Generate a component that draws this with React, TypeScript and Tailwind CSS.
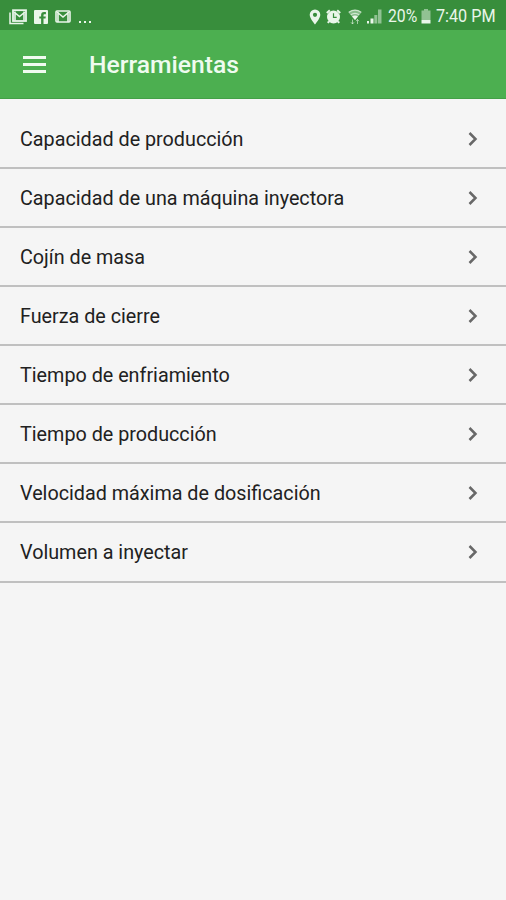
import React from "react";

const tools = [
	"Capacidad de producción",
	"Capacidad de una máquina inyectora",
	"Cojín de masa",
	"Fuerza de cierre",
	"Tiempo de enfriamiento",
	"Tiempo de producción",
	"Velocidad máxima de dosificación",
	"Volumen a inyectar",
];

const StatusBar: React.FC = () => (
	<div className="flex h-[30px] items-center justify-between bg-[#388e3c] pt-[3px] pr-[10px] pl-[9px] text-[#eaf6ea]">
		<div className="flex items-center">
			{/* stacked mail */}
			<svg width="18" height="16" viewBox="0 0 18 16" fill="none" stroke="currentColor">
				<path d="M1 3.5v11h13.5" strokeWidth="1.5" />
				<rect x="4" y="1.2" width="13" height="10.8" strokeWidth="1.8" />
				<path d="M5 3l5.5 4.5L16 3M6 2.5v9M15 2.5v9" strokeWidth="1.6" />
			</svg>
			<svg className="ml-[7px]" width="14" height="14" viewBox="0 0 14 14" fill="currentColor">
				<path d="M1 0h12a1 1 0 0 1 1 1v12a1 1 0 0 1-1 1H9.500V8.600h2l.3-2.200H9.500V5.200c0-.7.3-1 1-1h1.400V2.100H10C8 2.100 7.100 3.200 7.100 4.900v1.500H5.300v2.200h1.800V14H1a1 1 0 0 1-1-1V1a1 1 0 0 1 1-1z" />
			</svg>
			<svg className="ml-[7px]" width="16" height="13" viewBox="0 0 16 13" fill="none" stroke="currentColor">
				<rect x="1" y="1" width="14" height="11" rx="1" strokeWidth="1.6" />
				<path d="M2 2l6 5 6-5M3 2v10M13 2v10" strokeWidth="1.600" />
			</svg>
			<div className="ml-[8px] mt-[10px] flex gap-[3px]">
				<i className="size-[2px] bg-current" />
				<i className="size-[2px] bg-current" />
				<i className="size-[2px] bg-current" />
			</div>
		</div>
		<div className="flex items-center">
			<svg width="12" height="16" viewBox="0 0 12 16" fill="currentColor">
				<path
					fillRule="evenodd"
					d="M6 .5A5.300 5.300 0 0 0 .7 5.800C.7 9.500 6 15.500 6 15.500s5.300-6 5.300-9.700A5.300 5.300 0 0 0 6 .5zM6 3.700a2.100 2.100 0 1 1 0 4.200 2.100 2.100 0 0 1 0-4.200z"
				/>
			</svg>
			<svg className="ml-[5px]" width="15" height="15" viewBox="0 0 15 15" fill="currentColor">
				<circle cx="7.500" cy="8" r="6.500" />
				<path d="M.8 4L3.800 1.200M14.200 4L11.200 1.200M3 12.500l-1.200 1.400M12 12.500l1.200 1.400" stroke="currentColor" strokeWidth="2" />
				<path d="M7.500 4.300v4h3.200" fill="none" stroke="#388e3c" strokeWidth="1.200" />
			</svg>
			<svg className="ml-[7px]" width="14" height="16" viewBox="0 0 14 16" fill="none" stroke="currentColor">
				<path d="M.3 3.200Q7-1.800 13.700 3.200L7 11z" fill="currentColor" stroke="none" opacity=".45" />
				<path d="M.8 3.200Q7-.8 13.200 3.200M2.800 5.800Q7 3 11.200 5.800" strokeWidth="1.300" opacity=".75" />
				<path d="M4 7.500Q7 5.500 10 7.500L7 11z" fill="currentColor" stroke="none" />
				<path d="M4.500 10.500v4.500M9.500 15v-4.500M3 13.300l1.500 1.700L6 13.300M8 12.200l1.500-1.700 1.500 1.700" strokeWidth="1" opacity=".6" />
			</svg>
			<svg className="ml-[5px]" width="15" height="15" viewBox="0 0 15 15" fill="currentColor">
				<path d="M0 12h2v2.500H0zM3.500 9.500h3v5h-3z" />
				<path d="M7.300 6h3v8.500h-3zM11 .500h3.500v14H11z" opacity=".5" />
			</svg>
			<span className="ml-[6px] w-[31px] text-[17.500px] leading-none whitespace-nowrap">
				<span className="inline-block origin-left scale-x-[0.9]">20%</span>
			</span>
			<svg className="ml-[2px]" width="10" height="15" viewBox="0 0 10 15" fill="currentColor">
				<path d="M3 0h4v1.500h2.500V11H.5V1.500H3z" opacity=".5" />
				<path d="M.5 11h9v3.500h-9z" />
			</svg>
			<span className="ml-[5px] w-[60px] text-[17.500px] leading-none whitespace-nowrap">
				<span className="inline-block origin-left scale-x-[0.925]">7:40 PM</span>
			</span>
		</div>
	</div>
);

const App: React.FC = () => {
	return (
		<div className="h-[900px] w-[506px] overflow-hidden bg-[#f5f5f5] font-[Roboto,sans-serif]">
			<StatusBar />
			<header className="flex h-[69px] items-center border-b border-[#43a047] bg-[#4caf50] pl-[23px] text-[#effbef]">
				<button type="button" aria-label="Menú" className="flex w-[23px] flex-col gap-1">
					<span className="h-[3px] w-full bg-current" />
					<span className="h-[3px] w-full bg-current" />
					<span className="h-[3px] w-full bg-current" />
				</button>
				<h1 className="mt-0.5 ml-[43px] text-[24.700px] leading-none font-medium">Herramientas</h1>
			</header>
			<ul className="pt-[11px]">
				{tools.map((tool) => (
					<li
						key={tool}
						className="flex h-[59.070px] items-center justify-between border-b-2 border-[#c0c0c0] pr-[28px] pl-5"
					>
						<span className="pt-0.5 text-[19.760px] leading-none text-[#212121]">{tool}</span>
						<svg width="10" height="14" viewBox="0 0 10 14" fill="none" stroke="#686868" strokeWidth="2.500">
							<path d="M1.500 1l6 6-6 6" />
						</svg>
					</li>
				))}
			</ul>
		</div>
	);
};

export default App;
